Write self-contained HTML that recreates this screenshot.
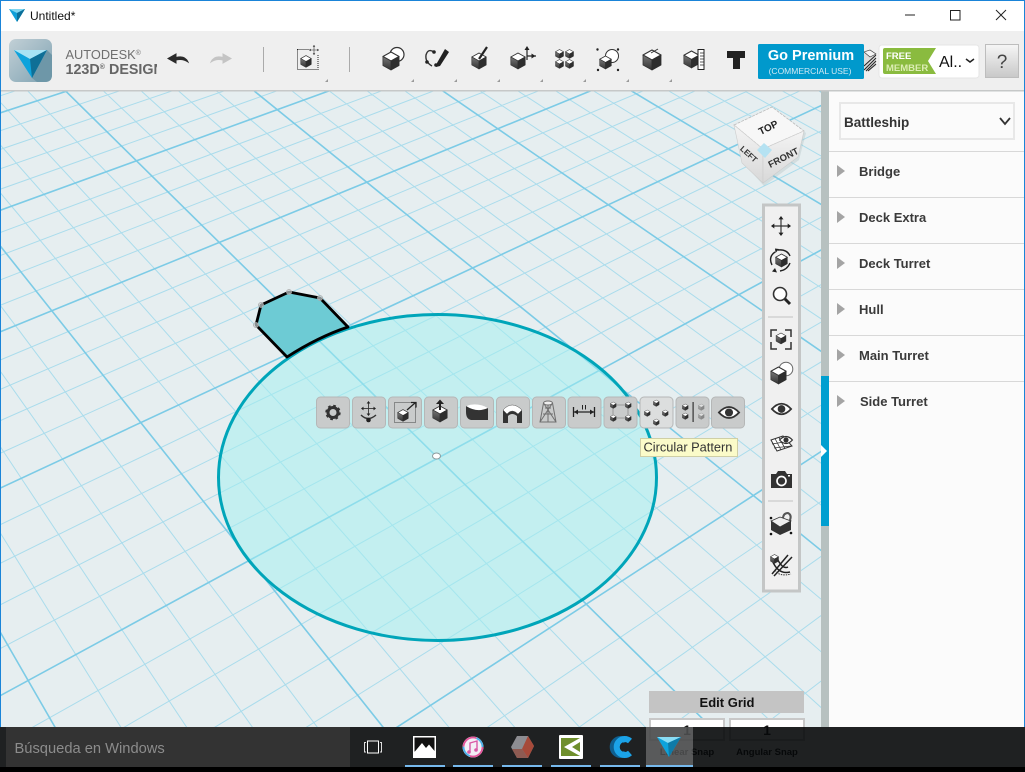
<!DOCTYPE html>
<html><head><meta charset="utf-8"><title>Untitled*</title>
<style>html,body{margin:0;padding:0;background:#fff;overflow:hidden}svg{display:block}text{font-family:"Liberation Sans",sans-serif}</style></head>
<body>
<svg xmlns="http://www.w3.org/2000/svg" width="1025" height="772" viewBox="0 0 1025 772">
<defs>
<linearGradient id="lg" x1="0" y1="0" x2="1" y2="1"><stop offset="0" stop-color="#c2d0d6"/><stop offset="1" stop-color="#7fa2b2"/></linearGradient>
<linearGradient id="hb" x1="0" y1="0" x2="0" y2="1"><stop offset="0" stop-color="#f6f6f6"/><stop offset="1" stop-color="#c8c8c8"/></linearGradient>
<linearGradient id="cf" x1="0" y1="0" x2="0" y2="1"><stop offset="0" stop-color="#f4f4f4"/><stop offset="1" stop-color="#d8d8d8"/></linearGradient>
<linearGradient id="lf" x1="0" y1="0" x2="0" y2="1"><stop offset="0" stop-color="#777"/><stop offset="1" stop-color="#333"/></linearGradient>
<clipPath id="cv"><rect x="1" y="91" width="820" height="636"/></clipPath>
<clipPath id="lc"><rect x="60" y="40" width="97" height="45"/></clipPath>
<symbol id="c" viewBox="0 0 20 22" overflow="visible">
<path d="M1 6L10 1L19 6L10 11Z" fill="#fff" stroke="#333" stroke-width="1.2" stroke-linejoin="round"/>
<path d="M1 6L10 11V21L1 16Z" fill="url(#lf)" stroke="#333" stroke-width=".8" stroke-linejoin="round"/>
<path d="M19 6L10 11V21L19 16Z" fill="#2e2e2e" stroke="#2e2e2e" stroke-width=".8" stroke-linejoin="round"/>
</symbol>
<symbol id="a" viewBox="0 0 24 24" overflow="visible">
<path d="M12 1V23M1 12H23" stroke="#333" stroke-width="1.4" fill="none"/>
<path d="M12 0L9 4H15ZM12 24L9 20H15ZM0 12L4 9V15ZM24 12L20 9V15Z" fill="#222"/>
</symbol>
<symbol id="e" viewBox="0 0 24 16" overflow="visible">
<path d="M1 8Q12 -4 23 8Q12 20 1 8Z" fill="#fff" stroke="#333" stroke-width="2"/>
<circle cx="12" cy="8" r="4.4" fill="#333"/>
</symbol>
</defs>

<rect width="1025" height="772" fill="#fff"/>
<rect x="1" y="91" width="820" height="636" fill="#e6eef0"/>
<g clip-path="url(#cv)" fill="none">
<path stroke="#aadcec" stroke-width="1" d="M-2196 800L2700-770M-2006 800L2700-770M-1910 800L2700-770M-1815 800L2700-770M-1719 800L2700-770M-1528 800L2700-770M-1433 800L2700-770M-1337 800L2700-770M-1242 800L2700-770M-1051 800L2700-770M-956 800L2700-770M-860 800L2700-770M-765 800L2700-770M-574 800L2700-770M-479 800L2700-770M-383 800L2700-770M-288 800L2700-770M-97 800L2700-770M-1 800L2700-770M94 800L2700-770M190 800L2700-770M380 800L2700-770M476 800L2700-770M571 800L2700-770M667 800L2700-770M2229 800L-808-770M2092 800L-808-770M2023 800L-808-770M1954 800L-808-770M1885 800L-808-770M1748 800L-808-770M1679 800L-808-770M1610 800L-808-770M1541 800L-808-770M1404 800L-808-770M1335 800L-808-770M1266 800L-808-770M1198 800L-808-770M1060 800L-808-770M991 800L-808-770M923 800L-808-770M854 800L-808-770M716 800L-808-770M647 800L-808-770M579 800L-808-770M510 800L-808-770M372 800L-808-770M304 800L-808-770M235 800L-808-770M166 800L-808-770M29 800L-808-770M-40 800L-808-770M-109 800L-808-770"/>
<path stroke="#7ccbe6" stroke-width="1.6" d="M-2101 800L2700-770M-1624 800L2700-770M-1147 800L2700-770M-669 800L2700-770M-192 800L2700-770M285 800L2700-770M762 800L2700-770M2160 800L-808-770M1817 800L-808-770M1473 800L-808-770M1129 800L-808-770M785 800L-808-770M441 800L-808-770M97 800L-808-770"/>
</g>

<ellipse cx="437.5" cy="477.5" rx="219" ry="163" fill="#a0f0f0" fill-opacity=".5" stroke="#00a5b9" stroke-width="3"/>
<ellipse cx="436.5" cy="456" rx="4" ry="3" fill="#fff" stroke="#8a9a9c" stroke-width="1"/>
<path d="M256 325L261 305L289 292L320 298L348 327Q318 337 287 357Z" fill="#6dcbd4" stroke="#000" stroke-width="2.8" stroke-linejoin="round"/>
<g fill="#e6eef0" fill-opacity=".6" stroke="#aaa" stroke-width=".8"><circle cx="256" cy="325" r="2.5"/><circle cx="261" cy="305" r="2.5"/><circle cx="289" cy="292" r="2.5"/><circle cx="320" cy="298" r="2.5"/></g>

<!-- view cube -->
<path d="M734 127L772 107L805 131L798 158L763 184L745 164Z" fill="#9aa" opacity=".25" transform="translate(1 2)"/>
<path d="M734 125L772 107L804 131L763 149Z" fill="#f7f7f7" stroke="#bbb" stroke-width=".8" stroke-dasharray="3 1"/>
<path d="M734 125L763 149V183L742 163Z" fill="url(#cf)" stroke="#ccc" stroke-width=".6"/>
<path d="M804 131L763 149V183L798 157Z" fill="url(#cf)" stroke="#ccc" stroke-width=".6"/>
<path d="M764 143L772 150L765 158L757 150Z" fill="#b5e2f2"/>
<text x="768" y="131" font-size="10" font-weight="bold" fill="#222" text-anchor="middle" transform="rotate(-26 768 127)">TOP</text>
<text x="783" y="161" font-size="9.5" font-weight="bold" fill="#333" text-anchor="middle" transform="rotate(-27 783 157)">FRONT</text>
<text x="749" y="157" font-size="8" font-weight="bold" fill="#333" text-anchor="middle" transform="rotate(42 749 154)">LEFT</text>

<!-- side panel -->
<rect x="821" y="91" width="8" height="636" fill="#b7c1c0"/>
<rect x="821" y="376" width="8" height="150" fill="#009fd0"/>
<path d="M821 445L827 451L821 457Z" fill="#fff"/>
<rect x="829" y="91" width="195" height="636" fill="#fbfbfb"/>
<rect x="840" y="103" width="174" height="36" fill="#fbfbfb" stroke="#e8e8e8" stroke-width="2"/>
<text x="844" y="127" font-size="13.5" font-weight="bold" fill="#333">Battleship</text>
<path d="M1000 118L1005 124L1010 118" fill="none" stroke="#333" stroke-width="1.8"/>
<g fill="#d8d8d8"><rect x="829" y="151" width="195" height="1"/><rect x="829" y="197" width="195" height="1"/><rect x="829" y="243" width="195" height="1"/><rect x="829" y="289" width="195" height="1"/><rect x="829" y="335" width="195" height="1"/><rect x="829" y="381" width="195" height="1"/></g>
<g fill="#a4a4a4"><path d="M837 165L845 171L837 177Z"/><path d="M837 211L845 217L837 223Z"/><path d="M837 257L845 263L837 269Z"/><path d="M837 303L845 309L837 315Z"/><path d="M837 349L845 355L837 361Z"/><path d="M837 395L845 401L837 407Z"/></g>
<g font-size="13" font-weight="bold" fill="#3a3a3a"><text x="859" y="176">Bridge</text><text x="859" y="222">Deck Extra</text><text x="859" y="268">Deck Turret</text><text x="859" y="314">Hull</text><text x="859" y="360">Main Turret</text><text x="860" y="406">Side Turret</text></g>

<!-- title bar & toolbar -->
<rect x="1" y="31" width="1023" height="60" fill="#efefef"/>
<rect x="1" y="90" width="820" height="1.5" fill="#c6c8c8"/><rect x="821" y="90" width="203" height="1.5" fill="#c6c8c8"/>
<path d="M9 9H25L17 22Z" fill="#0f9fd8"/><path d="M9 9H25L17 13Z" fill="#7fd6f0"/><path d="M25 9L17 13V22Z" fill="#0b6f99"/>
<text x="30" y="20" font-size="12" fill="#111">Untitled*</text>
<path d="M905 15H915" stroke="#222" stroke-width="1"/>
<rect x="950.500" y="10.500" width="9.500" height="9.500" fill="none" stroke="#222" stroke-width="1"/>
<path d="M996 10L1006 20M1006 10L996 20" stroke="#222" stroke-width="1"/>

<rect x="9" y="39" width="43" height="43" rx="7" fill="url(#lg)"/>
<path d="M47 50L52 55V75Q52 82 45 82H37L32 78Z" fill="#6e97a8"/>
<path d="M14 50H47L32 78Z" fill="#0ea3dc"/><path d="M14 50H47L30 59Z" fill="#a8e3f4"/><path d="M47 50L30 59L32 78Z" fill="#0f6f96"/>
<text x="65.500" y="59" font-size="12.800" fill="#6f6f6f">AUTODESK<tspan font-size="7" dy="-4">®</tspan></text>
<g clip-path="url(#lc)" font-weight="bold" fill="#666"><text x="65.500" y="74" font-size="14.300">123D<tspan font-size="7" dy="-5">®</tspan></text><text x="109" y="74" font-size="14.300">DESIGN</text></g>
<path d="M188 62Q185 55 176 57.500V54L168 58.500L176 63V60Q183 58.500 188 62Z" fill="#2a2a2a" stroke="#2a2a2a" stroke-width="1"/>
<path d="M211 62Q214 55 223 57.500V54L231 58.500L223 63V60Q216 58.500 211 62Z" fill="#c4c4c4" stroke="#c4c4c4" stroke-width="1"/>
<rect x="263" y="47" width="1" height="25" fill="#aaa"/><rect x="349" y="47" width="1" height="25" fill="#aaa"/>

<!-- top icons -->
<rect x="297.500" y="49.500" width="20.500" height="20" fill="none" stroke="#222" stroke-dasharray="1 1"/>
<use href="#c" x="300" y="55" width="12" height="13"/>
<rect x="309" y="44" width="11" height="11" fill="#efefef"/>
<use href="#a" x="309" y="45" width="10" height="10"/>

<circle cx="397" cy="54.500" r="7" fill="#fff" stroke="#333" stroke-width="1.2"/><use href="#c" x="382" y="51" width="18" height="20"/>

<path d="M434 52Q428 48 426 55Q425 62 432 66" fill="none" stroke="#333" stroke-width="1.4"/>
<circle cx="434" cy="52" r="1.800" fill="#222"/><circle cx="427" cy="62" r="1.800" fill="#222"/><circle cx="436" cy="65" r="1.800" fill="#222"/>
<path d="M437 63L445 49L449 52L440 66L436 67Z" fill="#222"/>

<use href="#c" x="471" y="52" width="16" height="18"/><path d="M479 59L487 47" stroke="#222" stroke-width="2.200"/>

<use href="#c" x="510" y="52" width="16" height="18"/>
<path d="M527 60V49M527 56H536" stroke="#222" stroke-width="1.200"/><path d="M527 46L524.500 50H529.500ZM535.500 56L531.500 53.500V58.500Z" fill="#222"/>

<use href="#c" x="555" y="49" width="9" height="10"/><use href="#c" x="565" y="49" width="9" height="10"/><use href="#c" x="555" y="59" width="9" height="10"/><use href="#c" x="565" y="59" width="9" height="10"/>

<circle cx="612" cy="56" r="6.500" fill="#fff" stroke="#333"/><use href="#c" x="599" y="55" width="13" height="15"/>
<g fill="#222"><circle cx="597.500" cy="49.500" r="1.200"/><circle cx="618" cy="49.500" r="1.200"/><circle cx="598" cy="70" r="1.200"/><circle cx="618" cy="70" r="1.200"/></g>

<use href="#c" x="642" y="49" width="20" height="22"/><path d="M651 53L658 49" stroke="#333"/>

<use href="#c" x="683" y="49" width="17" height="21"/>
<rect x="698" y="49.500" width="6" height="20" fill="#fff" stroke="#222"/><path d="M700 53H704M700 56H704M700 59H704M700 62H704M700 65H704" stroke="#222" stroke-width=".8"/>

<path d="M727 51H745V58H740V69H733V58H727Z" fill="#222"/>

<g fill="#9a9a9a"><path d="M328 79V82H325Z"/><path d="M414 79V82H411Z"/><path d="M457 79V82H454Z"/><path d="M500 79V82H497Z"/><path d="M543 79V82H540Z"/><path d="M586 79V82H583Z"/><path d="M629 79V82H626Z"/><path d="M672 79V82H669Z"/></g>

<!-- striped cube -->
<path d="M860 56L866 50L876 55V66L866 72Z" fill="#ddd"/><path d="M864 70L876 58M866 71L876 61M868 71L876 64M864 66L876 55" stroke="#222" stroke-width="1"/>
<path d="M864 52L870 50L876 54L870 57Z" fill="#f4f4f4" stroke="#333" stroke-width=".6"/>

<rect x="758" y="44" width="106" height="35" rx="1.500" fill="#0099cc"/>
<text x="811" y="60" font-size="14.500" font-weight="bold" fill="#fff" text-anchor="middle">Go Premium</text>
<text x="810" y="74" font-size="8.500" fill="#cfe9f4" text-anchor="middle">(COMMERCIAL USE)</text>

<rect x="879" y="45" width="100" height="33" rx="3" fill="#fff" stroke="#e6e6e6"/>
<path d="M885 48H936L928 61L936 74H885Q883 74 883 72V50Q883 48 885 48Z" fill="#8abb3f"/>
<text x="886" y="59" font-size="9.500" font-weight="bold" fill="#fff">FREE</text>
<text x="886" y="71" font-size="9.500" font-weight="bold" fill="#dcedb4">MEMBER</text>
<text x="939" y="67" font-size="16" fill="#111">Al..</text>
<path d="M966 59L970 62L974 59" fill="none" stroke="#222" stroke-width="1.500"/>
<rect x="985.500" y="44.500" width="33" height="33" fill="url(#hb)" stroke="#bdbdbd"/>
<text x="1002" y="68" font-size="19" fill="#444" text-anchor="middle">?</text>

<!-- context toolbar -->
<g fill="#c9cbcb" stroke="#b5b7b7" stroke-width="1">
<rect x="316.500" y="397" width="33" height="31" rx="4"/><rect x="352.500" y="397" width="33" height="31" rx="4"/><rect x="388.500" y="397" width="33" height="31" rx="4"/><rect x="424.500" y="397" width="33" height="31" rx="4"/><rect x="460.500" y="397" width="33" height="31" rx="4"/><rect x="496.500" y="397" width="33" height="31" rx="4"/><rect x="532.500" y="397" width="33" height="31" rx="4"/><rect x="568" y="397" width="33" height="31" rx="4"/><rect x="604" y="397" width="33" height="31" rx="4"/><rect x="640" y="397" width="33" height="31" rx="4" fill="#dcdede"/><rect x="676" y="397" width="33" height="31" rx="4"/><rect x="711.500" y="397" width="33" height="31" rx="4"/>
</g>
<circle cx="333" cy="412.500" r="5" fill="none" stroke="#333" stroke-width="3"/><circle cx="333" cy="412.500" r="6.800" fill="none" stroke="#333" stroke-width="1.800" stroke-dasharray="2.700 2.640"/>
<use href="#a" x="361" y="401" width="15" height="15"/><path d="M361 415Q368 422 376 415" fill="none" stroke="#333" stroke-width="1.400"/><circle cx="368.500" cy="420" r="2.300" fill="#222"/>
<rect x="394.500" y="402.500" width="21" height="20" fill="none" stroke="#444" stroke-dasharray="1 1"/><use href="#c" x="397" y="409" width="12" height="13"/><path d="M407 410L415 403M411 402.500H416V407.500" stroke="#222" stroke-width="1.300" fill="none"/>
<use href="#c" x="432" y="405" width="16" height="18"/><path d="M440 410V402" stroke="#222" stroke-width="2"/><path d="M440 399.500L436 404H444Z" fill="#222"/>
<path d="M466 406Q477 403 488 408V420H471Q466 419 466 412Z" fill="#333"/><path d="M466 406Q477 402 488 408Q477 413 466 406Z" fill="#fff"/>
<path d="M503 410Q512 400 522 410V423H517V416Q512 412 508 416V423H503Z" fill="#333"/><path d="M503 410Q512 400 522 410L518 414Q512 408 507 414Z" fill="#fff" stroke="#555" stroke-width=".5"/>
<g fill="none" stroke="#6f6f6f" stroke-width="1"><ellipse cx="548" cy="403" rx="4.500" ry="2" fill="#eee"/><path d="M543.500 403L540 422H556L552.500 403M545 408H551M543 414H553M540 422L552.500 403M556 422L543.500 403M548 405V422"/></g>
<path d="M574 412H594" stroke="#222" stroke-width="1.200"/><path d="M573.500 407V417M594.500 407V417" stroke="#222" stroke-width="1.300"/><path d="M574 412L578 409.500V414.500ZM594 412L590 409.500V414.500Z" fill="#222"/><path d="M582.500 405V409.500M585.500 405V409.500" stroke="#222"/>
<path d="M613 405H628V418H613Z" fill="none" stroke="#999"/>
<use href="#c" x="610" y="401.500" width="6.500" height="7.500"/><use href="#c" x="625" y="401.500" width="6.500" height="7.500"/><use href="#c" x="610" y="414.500" width="6.500" height="7.500"/><use href="#c" x="625" y="414.500" width="6.500" height="7.500"/>
<use href="#c" x="653" y="399.500" width="6.500" height="7.500"/><use href="#c" x="644" y="409.500" width="6.500" height="7.500"/><use href="#c" x="662" y="409.500" width="6.500" height="7.500"/><use href="#c" x="653" y="418.500" width="6.500" height="7.500"/>
<use href="#c" x="682" y="403.500" width="6.500" height="7.500"/><use href="#c" x="682" y="412.500" width="6.500" height="7.500"/><rect x="692.500" y="402" width="1.200" height="20" fill="#333"/>
<g opacity=".42"><use href="#c" x="698" y="403.500" width="6.500" height="7.500"/><use href="#c" x="698" y="412.500" width="6.500" height="7.500"/></g>
<use href="#e" x="718" y="405" width="22" height="15"/>

<rect x="640.500" y="438.500" width="97" height="18" fill="#fbfbc9" stroke="#cfcfa6"/>
<text x="643.500" y="451.500" font-size="12.800" fill="#333">Circular Pattern</text>

<!-- right toolbar -->
<rect x="763.500" y="205" width="36" height="386" fill="#f0f0f0" stroke="#c4c6c6" stroke-width="3"/>
<use href="#a" x="771" y="216" width="20" height="20"/>
<use href="#c" x="775" y="253" width="13" height="15"/><path d="M772 265Q768 257 775 252M778 250Q787 249 790 256M790 263Q787 270 780 271" fill="none" stroke="#222" stroke-width="1.400"/><path d="M775 268L777 272.500L772 271.500ZM779 249L775.500 253L775 248.500Z" fill="#222"/>
<circle cx="780" cy="294" r="6.500" fill="#fff" stroke="#333" stroke-width="1.600"/><path d="M785 299L790 304" stroke="#222" stroke-width="3"/>
<rect x="768" y="316.500" width="25" height="1" fill="#c2c2c2"/>
<path d="M771 337V330H777M785 330H791V337M771 342V349H777M785 349H791V342" fill="none" stroke="#333" stroke-width="1.500"/><use href="#c" x="775.500" y="332" width="11" height="13"/>
<circle cx="786" cy="369" r="6.800" fill="#fff" stroke="#666"/><use href="#c" x="770" y="366" width="17" height="19"/>
<use href="#e" x="771" y="402" width="21" height="14"/>
<path d="M771 440L783 436L792 446L777 451Z" fill="#fff" stroke="#333"/><path d="M775 438.500L781 450M779 437.500L785 448.500M772 444L790 441M774 448L791 446" stroke="#333" stroke-width=".8"/><use href="#e" x="779" y="435" width="14" height="10"/>
<path d="M771 474H776L778 471H785L787 474H792V488H771Z" fill="#333"/><circle cx="781.500" cy="481" r="4.500" fill="#333" stroke="#fff" stroke-width="1.700"/><rect x="788" y="475" width="2" height="1.500" fill="#fff"/>
<rect x="768" y="500.500" width="25" height="1" fill="#c2c2c2"/>
<path d="M783 525V519Q783 513 788 513Q792 515 790 520L787 525" fill="none" stroke="#555" stroke-width="2"/>
<path d="M771 521L780 517L791 521L780 527Z" fill="#eee" stroke="#333" stroke-width=".8"/><path d="M771 521L780 527V535L771 530ZM780 527L791 521V530L780 535Z" fill="#333"/>
<g fill="#111"><circle cx="771" cy="518" r="1.300"/><circle cx="771" cy="534" r="1.300"/><circle cx="791" cy="533" r="1.300"/></g>
<path d="M772 560Q778 575 790 572M776 556Q782 570 788 567M788 555L772 574M792 557L774 576" fill="none" stroke="#222" stroke-width="1.500"/><use href="#c" x="770" y="554" width="9" height="10"/><path d="M775 570Q779 577 791 574" fill="none" stroke="#333" stroke-dasharray="1.500 1"/>

<!-- edit grid -->
<rect x="649" y="691" width="155" height="22" fill="#c4c4c4"/>
<text x="727" y="707" font-size="13" font-weight="bold" fill="#111" text-anchor="middle">Edit Grid</text>
<rect x="650" y="719" width="74" height="21" fill="#fff" stroke="#c8c8c8" stroke-width="2"/><rect x="730" y="719" width="74" height="21" fill="#fff" stroke="#c8c8c8" stroke-width="2"/>
<text x="687" y="735" font-size="14" font-weight="bold" fill="#111" text-anchor="middle">1</text><text x="767" y="735" font-size="14" font-weight="bold" fill="#111" text-anchor="middle">1</text>
<text x="687" y="755" font-size="9.500" font-weight="bold" fill="#000" text-anchor="middle">Linear Snap</text><text x="767" y="755" font-size="9.500" font-weight="bold" fill="#000" text-anchor="middle">Angular Snap</text>

<!-- window border -->
<rect x="0" y="0" width="1025" height="1" fill="#1a84d8"/><rect x="0" y="0" width="1" height="727" fill="#1a84d8"/><rect x="1024" y="0" width="1" height="727" fill="#1a84d8"/>

<!-- taskbar -->
<rect x="0" y="727" width="1025" height="40" fill="#07090a" fill-opacity=".9"/>
<rect x="0" y="767" width="1025" height="5" fill="#000"/>
<rect x="6" y="727" width="344" height="40" fill="#333"/>
<text x="14.500" y="753" font-size="14.700" fill="#8c8c8c">Búsqueda en Windows</text>
<rect x="367.500" y="741" width="11" height="12" fill="none" stroke="#fff"/><path d="M366 742.500H364.500V752H366M380 742.500H381.500V752H380" fill="none" stroke="#ddd"/>
<rect x="646" y="727" width="47" height="40" fill="#fff" fill-opacity=".26"/>
<rect x="413" y="736" width="23" height="22" fill="#fff"/><rect x="414.500" y="737.500" width="20" height="14" fill="#111"/><path d="M414.500 752L422 743L426 748L429 744.500L434.500 751V752Z" fill="#fff"/>
<circle cx="473" cy="747" r="10.500" fill="#f2eef5"/><circle cx="473" cy="747" r="9.500" fill="none" stroke="#e4559b" stroke-width="1.800" stroke-dasharray="18 12"/><circle cx="473" cy="747" r="9.500" fill="none" stroke="#4ab0ea" stroke-width="1.800" stroke-dasharray="12 18" stroke-dashoffset="-18"/><path d="M470 752V743L477 741V750" fill="none" stroke="#d95aa6" stroke-width="1.400"/><circle cx="469" cy="752" r="1.800" fill="#d95aa6"/><circle cx="476" cy="750" r="1.800" fill="#d95aa6"/>
<path d="M517 736H528L534 746L528 758H517L511 747Z" fill="#8d8d92"/><path d="M528 736L534 746L528 758L522 749Z" fill="#a64a3a"/><path d="M517 758H528L522 749L512 749Z" fill="#8e5b52"/>
<rect x="559" y="735" width="24" height="24" rx="1" fill="#fff"/><rect x="561" y="738" width="19" height="18" fill="#6f8f2c"/><path d="M580 738L564 747L580 756V752L572 747L580 742Z" fill="#fff"/>
<path d="M628 741A8 8 0 1 0 628 753" fill="none" stroke="#0f5f8f" stroke-width="6" transform="translate(-2 0)"/><path d="M630 741A8 8 0 1 0 630 753" fill="none" stroke="#1ba3e8" stroke-width="6"/>
<path d="M657 737H681L669 757Z" fill="#0ea3dc"/><path d="M657 737H681L668 743Z" fill="#8adcf4"/><path d="M681 737L668 743L669 757Z" fill="#0f7ba8"/>
<g fill="#76b9ed"><rect x="405" y="765" width="40" height="2"/><rect x="453" y="765" width="40" height="2"/><rect x="502" y="765" width="40" height="2"/><rect x="551" y="765" width="40" height="2"/><rect x="600" y="765" width="40" height="2"/><rect x="646" y="765" width="47" height="2"/></g>
</svg>
</body></html>
